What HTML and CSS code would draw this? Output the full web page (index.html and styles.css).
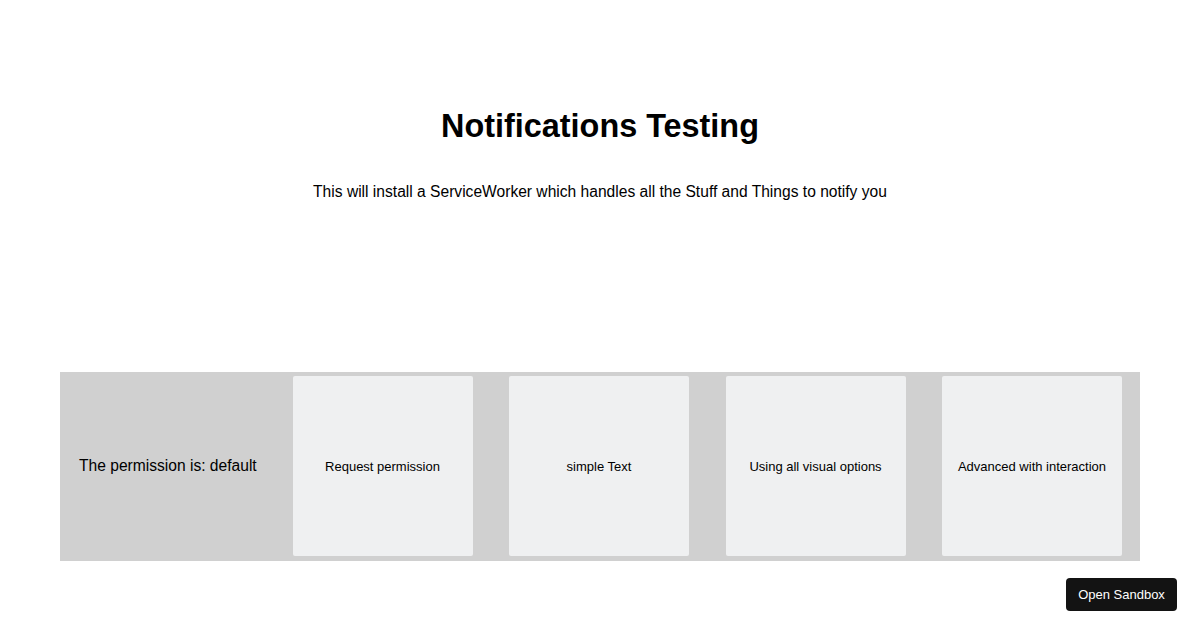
FILE: index.html
```html
<!DOCTYPE html>
<html>
<head>
<meta charset="utf-8">
<link rel="stylesheet" href="styles.css">
</head>
<body>
<main class="page">
  <h1 class="title">Notifications Testing</h1>
  <p class="lead">This will install a ServiceWorker which handles all the Stuff and Things to notify you</p>
  <section class="band">
    <p class="status">The permission is: default</p>
    <button class="tile">Request permission</button>
    <button class="tile">simple Text</button>
    <button class="tile">Using all visual options</button>
    <button class="tile">Advanced with interaction</button>
  </section>
</main>
<a class="sandbox">Open Sandbox</a>
</body>
</html>
```
FILE: styles.css
```css
html, body {
  margin: 0;
  padding: 0;
  background: #ffffff;
}
body {
  font-family: "Liberation Sans", Arial, sans-serif;
  color: #000;
}
.page {
  padding: 108px 60px 0;
  display: flex;
  flex-direction: column;
  align-items: stretch;
}
.title {
  margin: 0;
  font-size: 32.4px;
  line-height: 37px;
  font-weight: 700;
  text-align: center;
}
.lead {
  margin: 38px 0 0;
  font-size: 15.6px;
  line-height: 18px;
  text-align: center;
}
.band {
  margin-top: 171px;
  background: #d0d0d0;
  display: flex;
  align-items: center;
  gap: 36.5px;
  padding: 4px 18px 5px 19px;
}
.status {
  margin: 0;
  font-size: 15.6px;
  line-height: 18px;
  width: 177px;
  white-space: nowrap;
}
.tile {
  width: 180px;
  height: 180px;
  flex: 0 0 180px;
  background: #eff0f1;
  border: none;
  border-radius: 2px;
  font-family: "Liberation Sans", Arial, sans-serif;
  font-size: 13px;
  color: #000;
  padding: 0;
}
.sandbox {
  position: fixed;
  right: 23px;
  bottom: 19px;
  width: 111px;
  height: 33px;
  box-sizing: border-box;
  background: #131313;
  color: #fff;
  border-radius: 4px;
  font-family: "Liberation Sans", Arial, sans-serif;
  font-size: 13px;
  display: flex;
  align-items: center;
  justify-content: center;
}
```
